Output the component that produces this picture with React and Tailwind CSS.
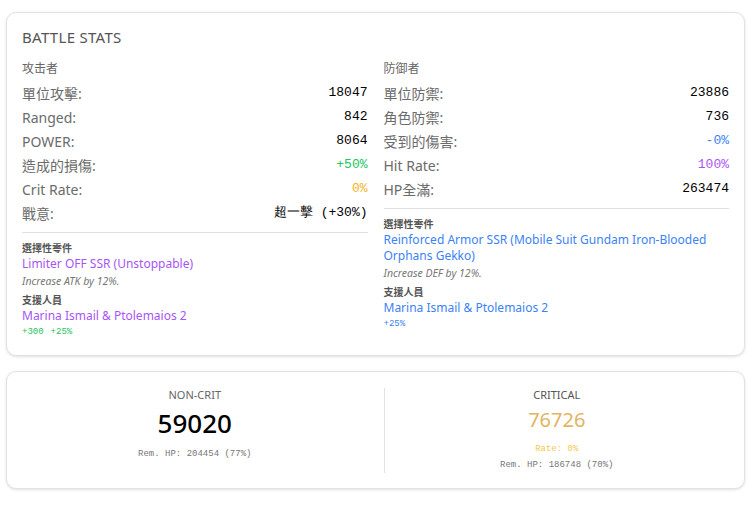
import React from "react";

const sans = { fontFamily: '"Noto Sans", "Noto Sans CJK TC", sans-serif' };
const mono = '"Liberation Mono", "DejaVu Sans Mono", monospace';

function Row({ label, value, color = "text-black" }) {
  return (
    <div className="flex h-6 items-center justify-between">
      <span className="text-[14px] text-[#6b6b6b]">{label}</span>
      <span className={`text-[13px] ${color}`} style={{ fontFamily: mono }}>{value}</span>
    </div>
  );
}

export default function App() {
  return (
    <div className="min-h-[505px] w-[751px] bg-white px-[6px] pt-[12px]" style={sans}>
      <div className="rounded-[10px] border border-[#e2e2e2] bg-white px-[15px] pb-[15px] pt-[14px] shadow-[0_1px_3px_rgba(0,0,0,0.12)]">
        <div className="text-[15px] leading-5 tracking-[0.3px] text-[#555]">BATTLE STATS</div>
        <div className="mt-[12px] grid grid-cols-2 gap-x-[16px]">
          <div>
            <div className="mb-[2px] text-[12px] leading-5 text-[#666]">攻击者</div>
            <Row label="單位攻擊:" value="18047" />
            <Row label="Ranged:" value="842" />
            <Row label="POWER:" value="8064" />
            <Row label="造成的損傷:" value="+50%" color="text-[#22c55e]" />
            <Row label="Crit Rate:" value="0%" color="text-[#f5b41d]" />
            <Row label="戰意:" value="超一擊 (+30%)" />
            <div className="mb-[7px] mt-[7px] border-t border-[#e2e2e2]" />
            <div className="text-[10px] leading-4 font-semibold text-[#555]">選擇性零件</div>
            <div className="text-[12px] leading-4 text-[#a855f7]">Limiter OFF SSR (Unstoppable)</div>
            <div className="mb-[2px] text-[10.5px] italic leading-[18px] text-[#777]">Increase ATK by 12%.</div>
            <div className="text-[10px] leading-4 font-semibold text-[#555]">支援人員</div>
            <div className="text-[12px] leading-4 text-[#a855f7]">Marina Ismail &amp; Ptolemaios 2</div>
            <div className="flex gap-[7px] text-[9px] leading-4 text-[#22c55e]" style={{ fontFamily: mono }}>
              <span>+300</span>
              <span>+25%</span>
            </div>
          </div>
          <div>
            <div className="mb-[2px] text-[12px] leading-5 text-[#666]">防御者</div>
            <Row label="單位防禦:" value="23886" />
            <Row label="角色防禦:" value="736" />
            <Row label="受到的傷害:" value="-0%" color="text-[#3b82f6]" />
            <Row label="Hit Rate:" value="100%" color="text-[#a855f7]" />
            <Row label="HP全滿:" value="263474" />
            <div className="mb-[7px] mt-[7px] border-t border-[#e2e2e2]" />
            <div className="text-[10px] leading-4 font-semibold text-[#555]">選擇性零件</div>
            <div className="text-[12px] leading-4 text-[#3b82f6]">Reinforced Armor SSR (Mobile Suit Gundam Iron-Blooded Orphans Gekko)</div>
            <div className="mb-[2px] text-[10.5px] italic leading-[18px] text-[#777]">Increase DEF by 12%.</div>
            <div className="text-[10px] leading-4 font-semibold text-[#555]">支援人員</div>
            <div className="text-[12px] leading-4 text-[#3b82f6]">Marina Ismail &amp; Ptolemaios 2</div>
            <div className="text-[9px] leading-4 text-[#3b82f6]" style={{ fontFamily: mono }}>+25%</div>
          </div>
        </div>
      </div>

      <div className="mt-[15px] grid grid-cols-2 gap-x-[16px] rounded-[10px] border border-[#e2e2e2] bg-white px-[15px] pb-[15px] pt-[16px] shadow-[0_1px_3px_rgba(0,0,0,0.12)]">
        <div className="flex flex-col items-center">
          <div className="text-[11px] leading-[14px] text-[#666]">NON-CRIT</div>
          <div className="text-[26px] font-medium leading-[42px] text-black">59020</div>
          <div className="mt-[2px] text-[9px] leading-4 text-[#777]" style={{ fontFamily: mono }}>Rem. HP: 204454 (77%)</div>
        </div>
        <div className="flex flex-col items-center border-l border-[#e2e2e2]">
          <div className="text-[11px] leading-[14px] text-[#555]">CRITICAL</div>
          <div className="text-[20px] leading-9 text-[#e3b462]">76726</div>
          <div className="mt-[3px] text-[9px] leading-4 text-[#f5c84c]" style={{ fontFamily: mono }}>Rate: 0%</div>
          <div className="text-[9px] leading-4 text-[#777]" style={{ fontFamily: mono }}>Rem. HP: 186748 (70%)</div>
        </div>
      </div>
    </div>
  );
}
